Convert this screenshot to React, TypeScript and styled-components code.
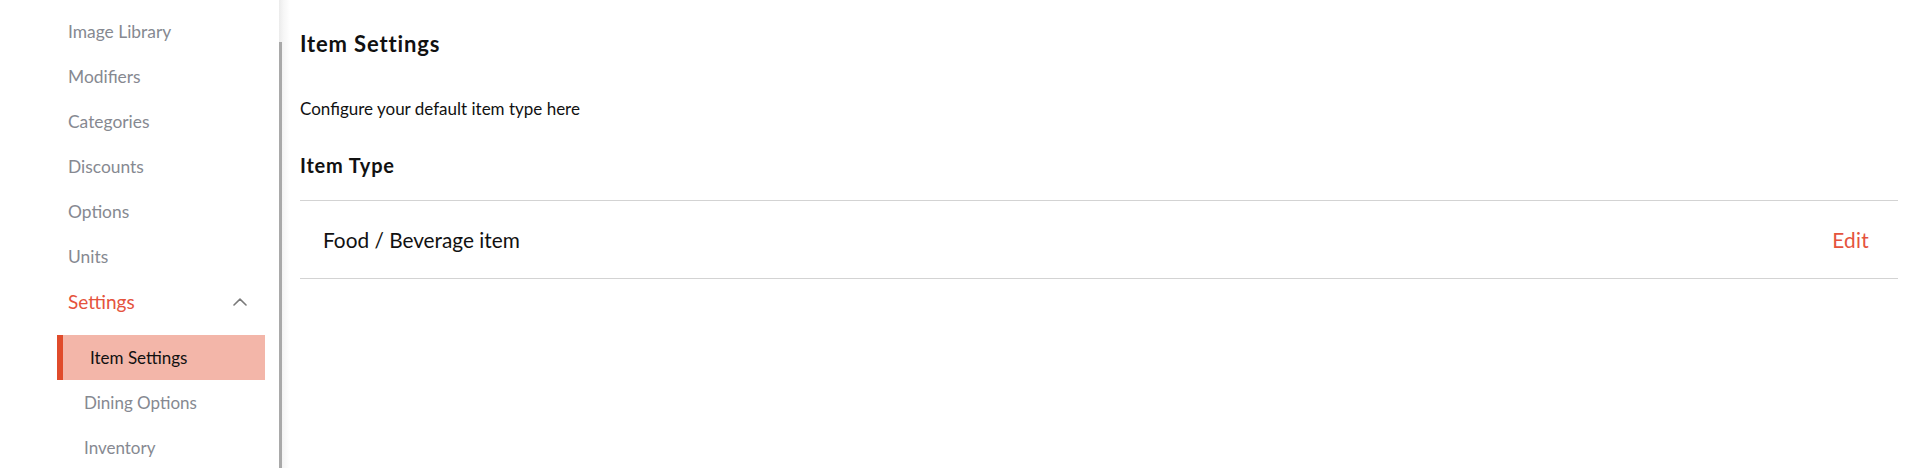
import React from "react";
import styled, { createGlobalStyle } from "styled-components";

const GlobalStyle = createGlobalStyle`
  html, body {
    margin: 0;
    padding: 0;
    background: #ffffff;
    overflow: hidden;
  }
  body {
    font-family: Lato, "Noto Sans", "Liberation Sans", sans-serif;
    -webkit-font-smoothing: antialiased;
  }
  * { box-sizing: border-box; }
`;

const Layout = styled.div`
  display: flex;
  width: 1915px;
  height: 468px;
  overflow: hidden;
`;

const Sidebar = styled.aside`
  width: 279px;
  flex: 0 0 279px;
  padding-top: 9px;
  padding-left: 57px;
`;

const NavList = styled.ul`
  list-style: none;
  margin: 0;
  padding: 0;
  width: 208px;
`;

const NavItem = styled.li<{ $active?: boolean; $large?: boolean }>`
  display: flex;
  align-items: center;
  justify-content: space-between;
  height: 45px;
  line-height: 45px;
  padding: 0 18px 0 11px;
  font-size: ${(p) => (p.$large ? "19px" : "17.4px")};
  color: ${(p) => (p.$active ? "#e5533d" : "#868991")};
  cursor: pointer;
`;

const SubList = styled.ul`
  list-style: none;
  margin: 11px 0 0 0;
  padding: 0;
`;

const SubItem = styled.li<{ $active?: boolean }>`
  height: 45px;
  line-height: 45px;
  font-size: 17px;
  padding-left: 27px;
  color: ${(p) => (p.$active ? "#111111" : "#868991")};
  background: ${(p) => (p.$active ? "#f3b6a9" : "transparent")};
  border-left: ${(p) => (p.$active ? "6px solid #e04b2b" : "none")};
`;

const Gutter = styled.div`
  position: relative;
  width: 11px;
  flex: 0 0 11px;
  background: linear-gradient(to right, #ebebeb 0%, #f6f6f6 40%, #ffffff 100%);
`;

const ScrollThumb = styled.div`
  position: absolute;
  left: 0;
  top: 42px;
  bottom: 0;
  width: 3px;
  background: #a9a9a9;
`;

const Main = styled.main`
  flex: 1;
  padding: 32px 17px 0 10px;
  color: #111111;
`;

const Title = styled.h1`
  margin: 0;
  font-size: 22px;
  line-height: 24px;
  font-weight: 700;
  letter-spacing: 0.85px;
`;

const Description = styled.p`
  margin: 43px 0 0 0;
  font-size: 17px;
  line-height: 20px;
`;

const SectionTitle = styled.h2`
  margin: 35px 0 0 0;
  font-size: 20px;
  line-height: 23px;
  font-weight: 700;
  letter-spacing: 0.8px;
`;

const OptionList = styled.div`
  margin-top: 23px;
  border-top: 1px solid #d3d3d3;
`;

const OptionRow = styled.div`
  display: flex;
  align-items: center;
  justify-content: space-between;
  height: 78px;
  padding: 0 29px 0 23px;
  border-bottom: 1px solid #d3d3d3;
  font-size: 20.8px;
`;

const EditLink = styled.span`
  color: #e5533d;
  cursor: pointer;
  letter-spacing: 0.3px;
`;

const Chevron = () => (
  <svg width="14" height="8" viewBox="0 0 14 8" fill="none">
    <polyline
      points="1,7 7,1.2 13,7"
      stroke="#7a7a7a"
      strokeWidth="1.6"
      strokeLinecap="round"
      strokeLinejoin="round"
    />
  </svg>
);

const mainItems = ["Image Library", "Modifiers", "Categories", "Discounts", "Options", "Units"];
const subItems = ["Item Settings", "Dining Options", "Inventory"];

export default function App() {
  return (
    <>
      <GlobalStyle />
      <Layout>
        <Sidebar>
          <NavList>
            {mainItems.map((item) => (
              <NavItem key={item}>{item}</NavItem>
            ))}
            <NavItem $active $large>
              <span>Settings</span>
              <Chevron />
            </NavItem>
            <li>
              <SubList>
                {subItems.map((item, i) => (
                  <SubItem key={item} $active={i === 0}>
                    {item}
                  </SubItem>
                ))}
              </SubList>
            </li>
          </NavList>
        </Sidebar>
        <Gutter>
          <ScrollThumb />
        </Gutter>
        <Main>
          <Title>Item Settings</Title>
          <Description>Configure your default item type here</Description>
          <SectionTitle>Item Type</SectionTitle>
          <OptionList>
            <OptionRow>
              <span>Food / Beverage item</span>
              <EditLink>Edit</EditLink>
            </OptionRow>
          </OptionList>
        </Main>
      </Layout>
    </>
  );
}
